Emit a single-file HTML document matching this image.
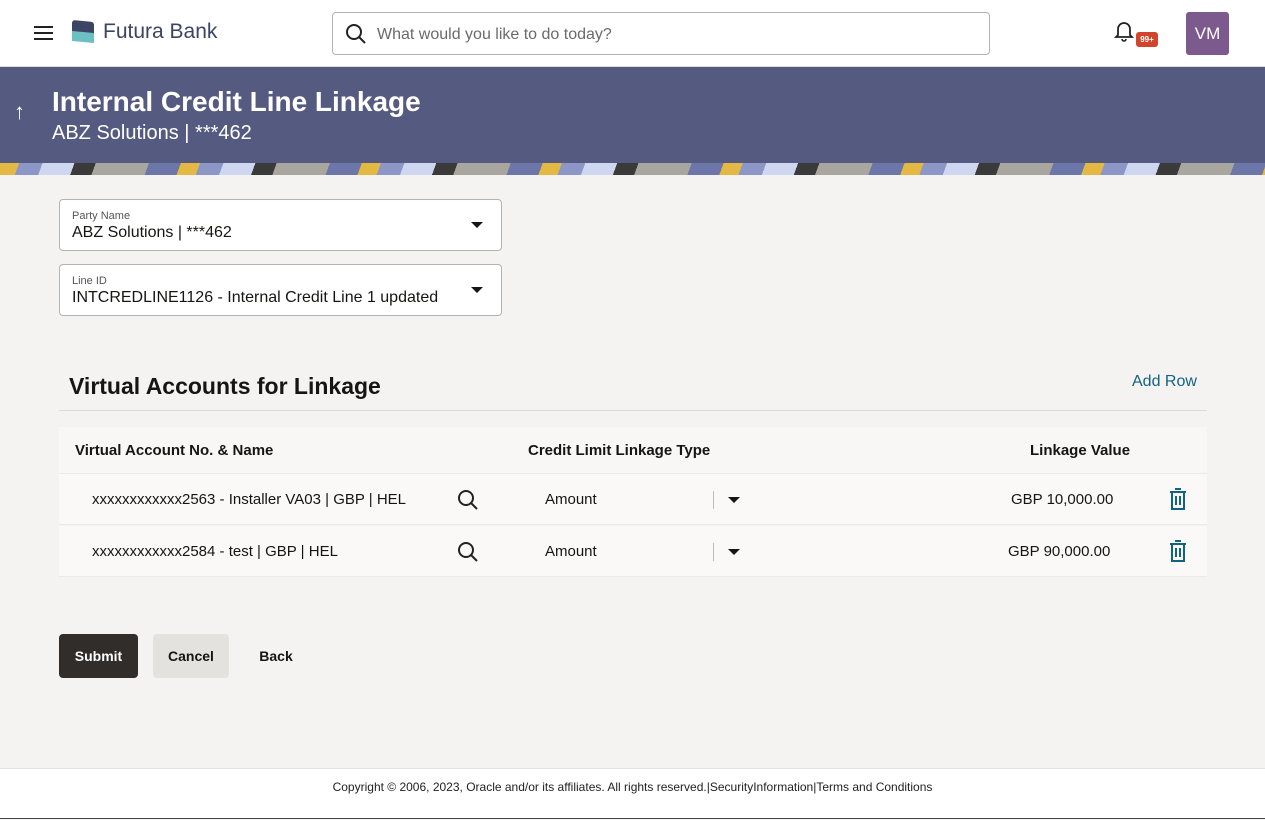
<!DOCTYPE html>
<html><head><style>
*{box-sizing:border-box;margin:0;padding:0}
body{width:1265px;height:820px;background:#f4f3f1;font-family:"Liberation Sans",sans-serif;color:#161513;position:relative;overflow:hidden}
.top{position:absolute;left:0;top:0;width:1265px;height:67px;background:#fff;border-bottom:1px solid #ddd}
.banner{position:absolute;left:0;top:67px;width:1265px;height:108px;background:#555a80;overflow:hidden}
.stripe{position:absolute;left:0;top:163px;width:1265px;height:12px;background:repeating-linear-gradient(110deg,#e3b944 0 18px,#8c97c8 18px 40px,#cfd6ef 40px 70px,#3a3a3a 70px 90px,#a9a6a0 90px 140px,#6c76a8 140px 170px)}
.field{position:absolute;left:59px;width:443px;height:52px;background:#fff;border:1px solid #b5b3b0;border-radius:4px}
.field .l{position:absolute;left:12px;top:10px;font-size:11px;color:#555}
.field .v{position:absolute;left:12px;top:24px;font-size:16px}
.caret{position:absolute;width:0;height:0;border-left:6px solid transparent;border-right:6px solid transparent;border-top:6px solid #161513}
.row{position:absolute;left:59px;width:1148px;height:51px;background:#faf9f8;border-bottom:1px solid #ebe9e6;font-size:15px}
.row span{position:absolute;top:17px}
.btn{position:absolute;top:634px;height:44px;border-radius:4px;font-size:14px;font-weight:bold;text-align:center;line-height:44px}
</style></head><body>
<div class="top">
 <div style="position:absolute;left:34px;top:26px;width:19px;height:2px;background:#222;box-shadow:0 6px 0 #222,0 12px 0 #222"></div>
 <div style="position:absolute;left:72px;top:21px;width:22px;height:14px;background:#3b4563;border-radius:3px 3px 0 0;transform:skewY(5deg)"></div>
 <div style="position:absolute;left:72px;top:32px;width:22px;height:10px;background:#6cc0c4;transform:skewY(5deg)"></div>
 <div style="position:absolute;left:103px;top:20px;font-size:21px;color:#3b4563">Futura Bank</div>
 <div style="position:absolute;left:332px;top:12px;width:658px;height:43px;border:1px solid #b5b3b0;border-radius:4px">
  <svg style="position:absolute;left:12px;top:10px" width="22" height="22" viewBox="0 0 22 22"><circle cx="9" cy="9" r="7" fill="none" stroke="#222" stroke-width="2"/><line x1="14" y1="14" x2="20" y2="20" stroke="#222" stroke-width="2"/></svg>
  <span style="position:absolute;left:44px;top:13px;font-size:16px;color:#6a6a6a">What would you like to do today?</span>
 </div>
 <svg style="position:absolute;left:1114px;top:20px" width="20" height="22" viewBox="0 0 20 22"><path d="M4 15V9a6 6 0 0 1 12 0v6l2 2H2z" fill="none" stroke="#222" stroke-width="1.8"/><path d="M8 19a2 2 0 0 0 4 0" fill="none" stroke="#222" stroke-width="1.6"/></svg>
 <div style="position:absolute;left:1136px;top:32px;width:22px;height:15px;background:#d2452d;border-radius:3px;color:#fff;font-size:8px;font-weight:bold;text-align:center;line-height:15px">99+</div>
 <div style="position:absolute;left:1186px;top:12px;width:43px;height:43px;background:#7c5a8d;border-radius:3px;color:#fff;font-size:17px;text-align:center;line-height:43px">VM</div>
</div>
<div class="banner">
 <div style="position:absolute;left:14px;top:32px;color:#fff;font-size:22px">↑</div>
 <div style="position:absolute;left:52px;top:19px;color:#fff;font-size:28px;font-weight:bold">Internal Credit Line Linkage</div>
 <div style="position:absolute;left:52px;top:55px;color:#fff;font-size:20px">ABZ Solutions | ***462</div>
</div>
<div class="stripe"></div>
<div class="field" style="top:199px"><div class="l">Party Name</div><div class="v">ABZ Solutions | ***462</div><div class="caret" style="left:411px;top:22px"></div></div>
<div class="field" style="top:264px"><div class="l">Line ID</div><div class="v">INTCREDLINE1126 - Internal Credit Line 1 updated</div><div class="caret" style="left:411px;top:22px"></div></div>
<div style="position:absolute;left:69px;top:373px;font-size:23px;font-weight:bold">Virtual Accounts for Linkage</div>
<div style="position:absolute;left:1132px;top:373px;font-size:16px;color:#116480">Add Row</div>
<div style="position:absolute;left:59px;top:410px;width:1148px;height:1px;background:#dcdad7"></div>
<div class="row" style="top:427px;height:47px;background:#f8f7f5;font-weight:bold;font-size:15px"><span style="left:16px;top:15px">Virtual Account No. &amp; Name</span><span style="left:469px;top:15px">Credit Limit Linkage Type</span><span style="left:971px;top:15px">Linkage Value</span></div>
<div class="row" style="top:474px"><span style="left:33px">xxxxxxxxxxxx2563 - Installer VA03 | GBP | HEL</span>
 <svg style="position:absolute;left:398px;top:15px" width="22" height="22" viewBox="0 0 22 22"><circle cx="9" cy="9" r="7" fill="none" stroke="#222" stroke-width="2"/><line x1="14" y1="14" x2="20" y2="20" stroke="#222" stroke-width="2"/></svg>
 <span style="left:486px">Amount</span><div style="position:absolute;left:654px;top:17px;width:1px;height:18px;background:#bbb"></div><div class="caret" style="left:669px;top:23px;border-width:6px 6px 0"></div>
 <span style="left:952px">GBP 10,000.00</span>
 <svg style="position:absolute;left:1110px;top:14px" width="18" height="22" viewBox="0 0 18 22"><path d="M6 1h6M1 4h16M3 4v17h12V4M7 8v9M11 8v9" fill="none" stroke="#116480" stroke-width="2"/></svg></div>
<div class="row" style="top:526px"><span style="left:33px">xxxxxxxxxxxx2584 - test | GBP | HEL</span>
 <svg style="position:absolute;left:398px;top:15px" width="22" height="22" viewBox="0 0 22 22"><circle cx="9" cy="9" r="7" fill="none" stroke="#222" stroke-width="2"/><line x1="14" y1="14" x2="20" y2="20" stroke="#222" stroke-width="2"/></svg>
 <span style="left:486px">Amount</span><div style="position:absolute;left:654px;top:17px;width:1px;height:18px;background:#bbb"></div><div class="caret" style="left:669px;top:23px"></div>
 <span style="left:949px">GBP 90,000.00</span>
 <svg style="position:absolute;left:1110px;top:14px" width="18" height="22" viewBox="0 0 18 22"><path d="M6 1h6M1 4h16M3 4v17h12V4M7 8v9M11 8v9" fill="none" stroke="#116480" stroke-width="2"/></svg></div>
<div class="btn" style="left:59px;width:79px;background:#312d2a;color:#fff">Submit</div>
<div class="btn" style="left:153px;width:76px;background:#e4e2df">Cancel</div>
<div class="btn" style="left:250px;width:52px">Back</div>
<div style="position:absolute;left:0;top:768px;width:1265px;height:51px;background:#fff;border-top:1px solid #e4e2df;border-bottom:1px solid #444;text-align:center;font-size:12px;padding-top:11px;color:#222">Copyright © 2006, 2023, Oracle and/or its affiliates. All rights reserved.|SecurityInformation|Terms and Conditions</div>
</body></html>
